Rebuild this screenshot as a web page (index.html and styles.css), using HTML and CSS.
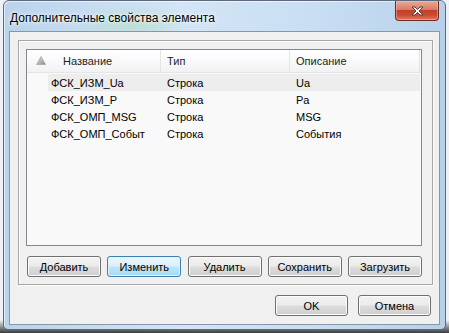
FILE: index.html
```html
<!DOCTYPE html>
<html>

<head>
    <title>Дополнительные свойства элемента</title>
    <meta charset="utf-8" />
    <link rel="stylesheet" href="styles.css">
</head>

<body>
    <div class="window">
        <div class="titlebar">
            <span class="title">Дополнительные свойства элемента</span>
            <div class="close-btn">
                <svg width="13" height="10" viewBox="0 0 13 10">
                    <path d="M1 1 L4 1 L6.5 3.5 L9 1 L12 1 L8 5 L12 9 L9 9 L6.5 6.5 L4 9 L1 9 L5 5 Z" fill="#fff" stroke="#5a3a36" stroke-width="1" stroke-linejoin="round" />
                </svg>
            </div>
        </div>
        <div class="client">
            <div class="group">
                <div class="listview">
                    <div class="lv-head">
                        <div class="hcol c1">
                            <svg class="sort" width="10" height="9" viewBox="0 0 10 9">
                                <defs>
                                    <linearGradient id="sg" x1="0" y1="0" x2="1" y2="1">
                                        <stop offset="0" stop-color="#e4e4e4" />
                                        <stop offset="1" stop-color="#8a8a8a" />
                                    </linearGradient>
                                </defs>
                                <polygon points="5,0.5 9.5,8.5 0.5,8.5" fill="url(#sg)" stroke="#9a9a9a" stroke-width="0.6" />
                            </svg>
                            <span>Название</span>
                        </div>
                        <div class="hcol c2">Тип</div>
                        <div class="hcol c3">Описание</div>
                    </div>
                    <div class="lv-body">
                        <div class="row hot">
                            <div class="cell c1">ФСК_ИЗМ_Ua</div>
                            <div class="cell c2">Строка</div>
                            <div class="cell c3">Ua</div>
                        </div>
                        <div class="row">
                            <div class="cell c1">ФСК_ИЗМ_P</div>
                            <div class="cell c2">Строка</div>
                            <div class="cell c3">Pa</div>
                        </div>
                        <div class="row">
                            <div class="cell c1">ФСК_ОМП_MSG</div>
                            <div class="cell c2">Строка</div>
                            <div class="cell c3">MSG</div>
                        </div>
                        <div class="row">
                            <div class="cell c1">ФСК_ОМП_Событ</div>
                            <div class="cell c2">Строка</div>
                            <div class="cell c3">События</div>
                        </div>
                    </div>
                </div>
                <div class="btn-row">
                    <button class="btn">Добавить</button>
                    <button class="btn focus">Изменить</button>
                    <button class="btn">Удалить</button>
                    <button class="btn">Сохранить</button>
                    <button class="btn">Загрузить</button>
                </div>
            </div>
            <div class="dlg-buttons">
                <button class="btn">OK</button>
                <button class="btn">Отмена</button>
            </div>
        </div>
    </div>
</body>

</html>
```

FILE: styles.css
```css
body {
    margin: 0;
    width: 449px;
    height: 333px;
    overflow: hidden;
    background: linear-gradient(#eef2f6 0, #eef2f6 320px, #3a3a3a 333px);
    font-family: "Liberation Sans", Arial, sans-serif;
    font-size: 11px;
    color: #000;
}

.window {
    box-sizing: border-box;
    width: 443px;
    height: 330px;
    margin-left: 3px;
    padding: 0 5px 4px 5px;
    display: flex;
    flex-direction: column;
    border: 1px solid #5b6b7c;
    border-radius: 6px 6px 5px 5px;
    background:
        radial-gradient(ellipse 60px 18px at 130px 22px, rgba(170, 220, 180, 0.55), rgba(170, 220, 180, 0) 100%),
        linear-gradient(90deg, #b9d3ec 0, #d3e5f6 40%, #c9def3 70%, #b7d1eb 100%);
    box-shadow: inset 1px 1px 0 rgba(255, 255, 255, 0.6);
}

.titlebar {
    height: 30px;
    display: flex;
    flex-direction: row;
    align-items: flex-start;
    justify-content: space-between;
}

.title {
    margin-top: 10px;
    margin-left: 1px;
    font-size: 12px;
    color: #000;
    text-shadow: 0 0 6px #fff, 0 0 3px #fff;
}

.close-btn {
    box-sizing: border-box;
    width: 44px;
    height: 20px;
    margin-right: 1px;
    display: flex;
    align-items: center;
    justify-content: center;
    border: 1px solid #6e2b20;
    border-top: 0;
    border-radius: 0 0 4px 4px;
    background: linear-gradient(#e9a899 0, #dc7c67 45%, #c3412b 50%, #cc4a33 75%, #e07a5f 100%);
    box-shadow: inset 0 0 0 1px rgba(255, 200, 190, 0.45);
}

.close-btn svg {
    display: block;
}

.client {
    flex: 1;
    display: flex;
    flex-direction: column;
    border: 1px solid #8597ab;
    background: #f0f0f0;
    padding: 8px 6px 0 8px;
}

.group {
    display: flex;
    flex-direction: column;
    border: 1px solid #a6a6a6;
    box-shadow: 1px 1px 0 #fff, inset 1px 1px 0 #fff;
    padding: 8px 10px 7px 7px;
}

.listview {
    height: 197px;
    box-sizing: border-box;
    border: 1px solid #828790;
    background: #f9f9f9;
    overflow: hidden;
}

.lv-head {
    display: flex;
    flex-direction: row;
    height: 23px;
    box-sizing: border-box;
    border-bottom: 1px solid #e5e5e5;
    background: linear-gradient(#ffffff 0, #f7f8f9 60%, #f1f2f3 100%);
}

.hcol {
    box-sizing: border-box;
    display: flex;
    align-items: center;
    border-right: 1px solid #e3e4e6;
    color: #1e1e1e;
    white-space: nowrap;
}

.hcol.c1 {
    width: 134px;
    padding-left: 9px;
}

.hcol.c1 .sort {
    margin-right: 17px;
    margin-top: -1px;
}

.hcol.c2 {
    width: 129px;
    padding-left: 6px;
}

.hcol.c3 {
    width: 130px;
    padding-left: 6px;
}

.lv-body {
    padding-top: 1px;
}

.row {
    display: flex;
    flex-direction: row;
    height: 17px;
    margin-left: 21px;
    width: 372px;
}

.row.hot {
    background: #ededed;
}

.cell {
    box-sizing: border-box;
    display: flex;
    align-items: center;
    white-space: nowrap;
    overflow: hidden;
}

.cell.c1 {
    width: 113px;
    padding-left: 3px;
}

.cell.c2 {
    width: 129px;
    padding-left: 6px;
}

.cell.c3 {
    width: 130px;
    padding-left: 6px;
}

.btn-row {
    display: flex;
    flex-direction: row;
    justify-content: space-between;
    margin-top: 10px;
    padding-left: 1px;
}

.btn {
    box-sizing: border-box;
    width: 74px;
    height: 21px;
    padding: 0;
    font-family: "Liberation Sans", Arial, sans-serif;
    font-size: 11px;
    color: #000;
    border: 1px solid #707070;
    border-radius: 3px;
    background: linear-gradient(#f2f2f2 0, #ebebeb 49%, #dddddd 51%, #cfcfcf 100%);
    box-shadow: inset 0 0 0 1px #fcfcfc;
}

.btn.focus {
    border-color: #3c7fb1;
    background: linear-gradient(#eaf6fd 0, #d9f0fc 49%, #bee6fd 51%, #a7d9f5 100%);
    box-shadow: inset 0 0 0 1px #e3f3fc;
}

.dlg-buttons {
    display: flex;
    flex-direction: row;
    justify-content: flex-end;
    gap: 10px;
    margin-top: 10px;
    padding-right: 2px;
}

.dlg-buttons .btn {
    width: 73px;
}
```
